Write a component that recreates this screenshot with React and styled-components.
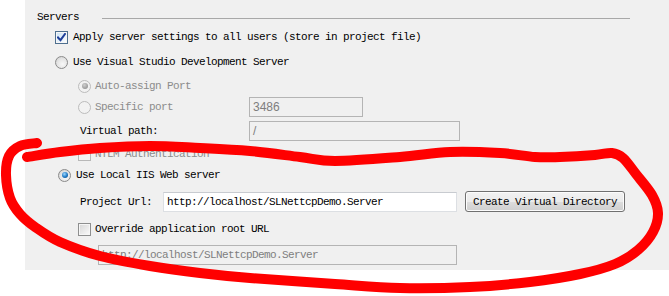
import React from "react";
import styled, { createGlobalStyle } from "styled-components";

const GlobalStyle = createGlobalStyle`
  html, body {
    margin: 0;
    padding: 0;
    background: #ffffff;
  }
  body {
    font-family: "Liberation Mono", "DejaVu Sans Mono", monospace;
  }
`;

const Page = styled.div`
  position: relative;
  width: 669px;
  height: 296px;
  overflow: hidden;
  background: #ffffff;
`;

const Panel = styled.div`
  margin-left: 25px;
  width: 644px;
  height: 270px;
  box-sizing: border-box;
  padding: 10px 39px 0 12px;
  background: #f0f0f0;
  display: flex;
  flex-direction: column;
`;

const Header = styled.div`
  display: flex;
  align-items: center;
  height: 14px;
`;

const Legend = styled.span`
  font-size: 11px;
  letter-spacing: -0.6px;
  color: #000;
  white-space: nowrap;
`;

const Rule = styled.div`
  flex: 1;
  height: 1px;
  margin: 3px 0 0 23px;
  background: #a8a8a8;
`;

const Row = styled.div`
  display: flex;
  align-items: center;
  height: ${(p) => p.$h || 20}px;
  margin-top: ${(p) => p.$mt || 0}px;
  padding-left: ${(p) => p.$indent || 0}px;
`;

const Option = styled.label`
  display: flex;
  align-items: center;
  width: ${(p) => (p.$w ? `${p.$w}px` : "auto")};
  flex-shrink: 0;
`;

const Text = styled.span`
  font-size: 11px;
  letter-spacing: -0.6px;
  white-space: nowrap;
  color: ${(p) => (p.$disabled ? "#8c8c8c" : "#000")};
  margin-left: ${(p) => p.$ml || 0}px;
`;

const FieldLabel = styled(Text)`
  display: inline-block;
  width: ${(p) => p.$w}px;
  flex-shrink: 0;
`;

const Box = styled.span`
  position: relative;
  display: inline-block;
  box-sizing: border-box;
  width: 13px;
  height: 13px;
  flex-shrink: 0;
  border: 1px solid ${(p) => (p.$disabled ? "#b8b8b8" : p.$checked ? "#4e6f8f" : "#8e8f8f")};
  background: ${(p) =>
    p.$disabled
      ? "#f4f4f4"
      : p.$checked
      ? "linear-gradient(135deg, #c9e1f5 0%, #e9f3fb 60%, #ffffff 100%)"
      : "linear-gradient(135deg, #d6d6d6 0%, #ececec 60%, #fbfbfb 100%)"};
  box-shadow: inset 0 0 0 1px ${(p) => (p.$disabled ? "#f4f4f4" : "#f6f6f6")};

  svg {
    position: absolute;
    left: 1px;
    top: 1px;
  }
`;

const Radio = styled.span`
  position: relative;
  display: inline-block;
  box-sizing: border-box;
  width: 13px;
  height: 13px;
  flex-shrink: 0;
  border-radius: 50%;
  border: 1px solid ${(p) => (p.$disabled ? "#bcbcbc" : "#8a8a8a")};
  background: ${(p) =>
    p.$disabled
      ? "#f2f2f2"
      : "radial-gradient(circle at 60% 65%, #f8f8f8 0%, #e4e4e4 55%, #c9c9c9 100%)"};

  &::after {
    content: "";
    display: ${(p) => (p.$checked ? "block" : "none")};
    position: absolute;
    left: 2.5px;
    top: 2.5px;
    width: 6px;
    height: 6px;
    border-radius: 50%;
    background: ${(p) =>
      p.$disabled
        ? "radial-gradient(circle at 40% 35%, #d0d0d0 0%, #9a9a9a 70%, #8a8a8a 100%)"
        : "radial-gradient(circle at 40% 35%, #9ed8ff 0%, #1d78c4 55%, #0d3f74 100%)"};
  }
`;

const Input = styled.div`
  box-sizing: border-box;
  width: ${(p) => p.$w}px;
  height: 20px;
  flex-shrink: 0;
  padding-left: 3px;
  display: flex;
  align-items: center;
  border: 1px solid ${(p) => (p.$disabled ? "#b4b4b4" : "#dcdfe3")};
  border-top-color: ${(p) => (p.$disabled ? "#b4b4b4" : "#c8cbd0")};
  background: ${(p) => (p.$disabled ? "#f0f0f0" : "#ffffff")};
  font-family: ${(p) => (p.$sans ? '"Liberation Sans", Arial, sans-serif' : '"Liberation Mono", monospace')};
  font-size: ${(p) => (p.$sans ? "12px" : "11px")};
  letter-spacing: ${(p) => (p.$sans ? "0" : "-0.6px")};
  color: ${(p) => (p.$disabled ? "#7e7e7e" : "#000")};
  white-space: nowrap;
`;

const Button = styled.button`
  box-sizing: border-box;
  width: 160px;
  height: 21px;
  margin-left: 8px;
  padding: 0;
  border: 1px solid #707070;
  border-radius: 3px;
  background: linear-gradient(#f2f2f2 0%, #ebebeb 50%, #dddddd 51%, #cfcfcf 100%);
  box-shadow: inset 0 0 0 1px #fcfcfc;
  font-family: "Liberation Mono", monospace;
  font-size: 11px;
  letter-spacing: -0.6px;
  color: #000;
  align-self: flex-start;
`;

const Scribble = styled.svg`
  position: absolute;
  left: 0;
  top: 0;
  pointer-events: none;
`;

const Check = () => (
  <svg width="9" height="9" viewBox="0 0 9 9">
    <path d="M1 4.5 L3.5 7.2 L8 1" fill="none" stroke="#1f3f9a" strokeWidth="2" strokeLinecap="square" />
  </svg>
);

const loop = [
  [37, 143], [20, 146], [9, 156], [6, 175], [10, 198], [20, 214], [35, 227],
  [60, 242], [100, 256], [150, 266], [200, 273], [250, 278], [335, 284],
  [400, 288], [470, 287], [530, 282], [580, 274], [615, 264], [638, 250],
  [653, 232], [658, 213], [652, 195], [636, 174], [623, 158], [612, 153],
  [595, 155], [560, 157], [535, 157], [500, 153], [450, 152], [400, 157],
  [335, 161], [300, 157], [250, 151], [200, 148], [150, 146], [100, 148],
  [60, 152], [27, 157],
];

// catmull-rom through the points, turned into cubic beziers
const smooth = (pts) => {
  let d = `M${pts[0][0]} ${pts[0][1]}`;
  for (let i = 0; i < pts.length - 1; i++) {
    const p0 = pts[i - 1] || pts[i];
    const p1 = pts[i];
    const p2 = pts[i + 1];
    const p3 = pts[i + 2] || p2;
    const c1 = [p1[0] + (p2[0] - p0[0]) / 6, p1[1] + (p2[1] - p0[1]) / 6];
    const c2 = [p2[0] - (p3[0] - p1[0]) / 6, p2[1] - (p3[1] - p1[1]) / 6];
    d += ` C${c1[0].toFixed(1)} ${c1[1].toFixed(1)} ${c2[0].toFixed(1)} ${c2[1].toFixed(1)} ${p2[0]} ${p2[1]}`;
  }
  return d;
};

const App = () => {
  return (
    <>
      <GlobalStyle />
      <Page>
        <Panel>
          <Header>
            <Legend>Servers</Legend>
            <Rule />
          </Header>

          <Row $mt={3} $indent={18}>
            <Option>
              <Box $checked>
                <Check />
              </Box>
              <Text $ml={5}>Apply server settings to all users (store in project file)</Text>
            </Option>
          </Row>

          <Row $mt={5} $indent={18}>
            <Option>
              <Radio />
              <Text $ml={5}>Use Visual Studio Development Server</Text>
            </Option>
          </Row>

          <Row $mt={4} $indent={41}>
            <Option>
              <Radio $checked $disabled />
              <Text $ml={4} $disabled>Auto-assign Port</Text>
            </Option>
          </Row>

          <Row $mt={1} $indent={41}>
            <Option $w={171}>
              <Radio $disabled />
              <Text $ml={4} $disabled>Specific port</Text>
            </Option>
            <Input $w={114} $disabled $sans>3486</Input>
          </Row>

          <Row $mt={4} $indent={43}>
            <FieldLabel $w={169}>Virtual path:</FieldLabel>
            <Input $w={211} $disabled $sans>/</Input>
          </Row>

          <Row $mt={3} $indent={41}>
            <Option>
              <Box $disabled />
              <Text $ml={4} $disabled>NTLM Authentication</Text>
            </Option>
          </Row>

          <Row $mt={1} $indent={21}>
            <Option>
              <Radio $checked />
              <Text $ml={5}>Use Local IIS Web server</Text>
            </Option>
          </Row>

          <Row $mt={6} $h={21} $indent={43}>
            <FieldLabel $w={83}>Project Url:</FieldLabel>
            <Input $w={294}>http://localhost/SLNettcpDemo.Server</Input>
            <Button>Create Virtual Directory</Button>
          </Row>

          <Row $mt={7} $indent={41}>
            <Option>
              <Box />
              <Text $ml={4}>Override application root URL</Text>
            </Option>
          </Row>

          <Row $mt={6} $indent={61}>
            <Input $w={359} $disabled>http://localhost/SLNettcpDemo.Server</Input>
          </Row>
        </Panel>

        <Scribble width="669" height="296" viewBox="0 0 669 296">
          <path
            d={smooth(loop)}
            fill="none"
            stroke="#ff0000"
            strokeWidth="10"
            strokeLinecap="round"
            strokeLinejoin="round"
          />
        </Scribble>
      </Page>
    </>
  );
};

export default App;
